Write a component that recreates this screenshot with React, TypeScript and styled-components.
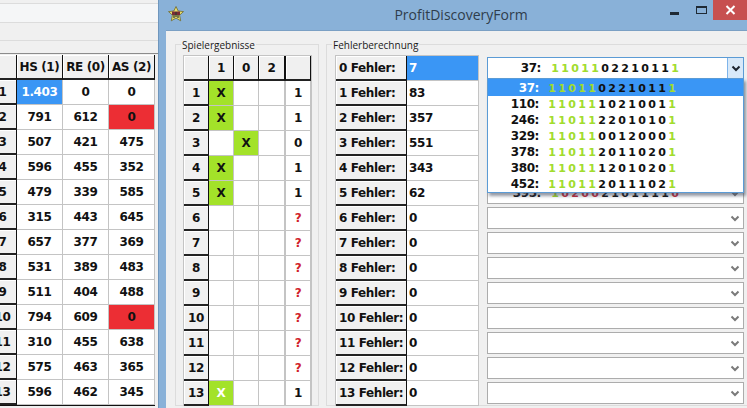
import styled, { createGlobalStyle } from "styled-components";

const GlobalStyle = createGlobalStyle`
  html, body {
    margin: 0;
    width: 747px;
    height: 408px;
    overflow: hidden;
    background: #f0f0f0;
  }
  * {
    box-sizing: border-box;
  }
`;

const scores = [
  ["1.403", "0", "0"],
  ["791", "612", "0"],
  ["507", "421", "475"],
  ["596", "455", "352"],
  ["479", "339", "585"],
  ["315", "443", "645"],
  ["657", "377", "369"],
  ["531", "389", "483"],
  ["511", "404", "488"],
  ["794", "609", "0"],
  ["310", "455", "638"],
  ["575", "463", "365"],
  ["596", "462", "345"],
];

// column index of the X per game, null = not played yet
const picks = [0, 0, 1, 0, 0, null, null, null, null, null, null, null, 0];
const errors = [7, 83, 357, 551, 343, 62, 0, 0, 0, 0, 0, 0, 0, 0];
const winner = "11011???????1";

const options = [
  { id: 37, digits: "1101102210111" },
  { id: 110, digits: "1101110210011" },
  { id: 246, digits: "1101122010101" },
  { id: 329, digits: "1101100120001" },
  { id: 378, digits: "1101120110201" },
  { id: 380, digits: "1101112010201" },
  { id: 452, digits: "1101120111021" },
];

function toneOf(digit: string, index: number) {
  if (winner[index] === "?") return "plain";
  return winner[index] === digit ? "hit" : "miss";
}

function Ticket({ id, digits, labelWidth, gap, active }: { id: number; digits: string; labelWidth: number; gap: number; active?: boolean }) {
  return (
    <TicketRow style={{ gap }}>
      <TicketId style={{ width: labelWidth }} $active={active}>{id}:</TicketId>
      <span>
        {digits.split("").map((d, i) => (
          <Digit key={i} $tone={toneOf(d, i)} $active={active}>{d}</Digit>
        ))}
      </span>
    </TicketRow>
  );
}

function Chevron({ dark }: { dark?: boolean }) {
  return (
    <svg width="10" height="7" viewBox="0 0 10 7">
      <polyline points="1.5,1.5 5,5 8.5,1.5" fill="none" stroke={dark ? "#1c2530" : "#7a7a7a"} strokeWidth="2" />
    </svg>
  );
}

function AppIcon() {
  return (
    <svg width="16" height="16" viewBox="0 0 16 16">
      <polygon points="8,0.5 10.2,5 15.5,5.6 11.6,9.2 12.7,14.8 8,12.1 3.3,14.8 4.4,9.2 0.5,5.6 5.8,5" fill="#e8dc6a" stroke="#6e6a30" strokeWidth="0.8" />
      <rect x="4" y="5.5" width="8" height="3.5" fill="#7a2b35" />
      <path d="M6 9v3M10 9v3M8 6v5" stroke="#2f3a30" strokeWidth="1.2" />
    </svg>
  );
}

export default function App() {
  return (
    <Screen>
      <GlobalStyle />
      <BackWindow>
        <Band $height={4} />
        <Band $height={19} $light />
        <Band $height={18} />
        <Band $height={13} $last />
        <ScoreGrid>
          <HeadCell />
          <HeadCell>HS (1)</HeadCell>
          <HeadCell>RE (0)</HeadCell>
          <HeadCell>AS (2)</HeadCell>
          {scores.map((row, i) => [
            <HeadCell key={`h${i}`}>{i + 1}</HeadCell>,
            ...row.map((value, j) => (
              <Cell
                key={`${i}-${j}`}
                $fill={i === 0 && j === 0 ? "#3a96f5" : value === "0" && j === 2 && i > 0 ? "#ec2e34" : undefined}
                $color={i === 0 && j === 0 ? "#fff" : undefined}
              >
                {value}
              </Cell>
            )),
          ])}
        </ScoreGrid>
      </BackWindow>

      <FormWindow>
        <TitleBar>
          <IconSlot>
            <AppIcon />
          </IconSlot>
          <Title>ProfitDiscoveryForm</Title>
          <WindowButton>
            <svg width="10" height="10" viewBox="0 0 10 10">
              <rect x="0" y="7" width="9" height="3" fill="#1f2a35" />
            </svg>
          </WindowButton>
          <WindowButton>
            <svg width="11" height="8" viewBox="0 0 11 8">
              <rect x="0.5" y="0.5" width="10" height="7" fill="none" stroke="#1f2a35" strokeWidth="1" />
              <rect x="0" y="0" width="11" height="2" fill="#1f2a35" />
            </svg>
          </WindowButton>
          <CloseButton>
            <svg width="11" height="10" viewBox="0 0 11 10">
              <path d="M1.5 1l8 8M9.5 1l-8 8" stroke="#fff" strokeWidth="2" />
            </svg>
          </CloseButton>
        </TitleBar>

        <Client>
          <ResultsBox>
            <Legend>Spielergebnisse</Legend>
            <ResultsGrid>
              <HeadCell />
              <HeadCell>1</HeadCell>
              <HeadCell>0</HeadCell>
              <HeadCell>2</HeadCell>
              <HeadCell $split />
              {picks.map((pick, i) => [
                <HeadCell key={`r${i}`}>{i + 1}</HeadCell>,
                ...[0, 1, 2].map((col) => (
                  <Cell
                    key={`${i}-${col}`}
                    $fill={pick === col ? "#a3e229" : undefined}
                    $color={i === 12 ? "#fff" : undefined}
                  >
                    {pick === col ? "X" : ""}
                  </Cell>
                )),
                <Cell key={`res${i}`} $split $color={pick === null ? "#d0202a" : undefined}>
                  {pick === null ? "?" : pick === 1 ? "0" : "1"}
                </Cell>,
              ])}
            </ResultsGrid>
          </ResultsBox>

          <ErrorsBox>
            <Legend>Fehlerberechnung</Legend>
            <ErrorsGrid>
              {errors.map((count, i) => [
                <ErrorLabel key={`e${i}`}>{i} Fehler:</ErrorLabel>,
                <ValueCell key={`v${i}`} $selected={i === 0}>{count}</ValueCell>,
              ])}
            </ErrorsGrid>
            <ComboColumn>
              <Combo $focused>
                <ComboValue>
                  <Ticket id={37} digits={options[0].digits} labelWidth={53} gap={9} />
                </ComboValue>
                <ComboArrow $focused>
                  <Chevron dark />
                </ComboArrow>
                <Popup>
                  {options.map((option, i) => (
                    <PopupItem key={option.id} $active={i === 0}>
                      <Ticket id={option.id} digits={option.digits} labelWidth={51} gap={8} active={i === 0} />
                    </PopupItem>
                  ))}
                </Popup>
              </Combo>
              {errors.slice(1).map((_, i) => (
                <Combo key={i}>
                  <ComboValue>
                    {i === 4 && <Ticket id={395} digits="1020021011110" labelWidth={53} gap={9} />}
                  </ComboValue>
                  <ComboArrow>
                    <Chevron />
                  </ComboArrow>
                </Combo>
              ))}
            </ComboColumn>
          </ErrorsBox>
        </Client>
      </FormWindow>
    </Screen>
  );
}

const Screen = styled.div`
  display: flex;
  width: 747px;
  height: 408px;
  overflow: hidden;
  font-family: "DejaVu Sans", Verdana, sans-serif;
  font-size: 12px;
  letter-spacing: -0.4px;
  font-weight: 700;
  color: #111;
`;

const BackWindow = styled.div`
  width: 158px;
  flex: none;
  overflow: hidden;
  background: #f0f0f0;
`;

const Band = styled.div<{ $height: number; $light?: boolean; $last?: boolean }>`
  height: ${(p) => p.$height}px;
  background: ${(p) => (p.$light ? "#f5f6f7" : "#f0f0f0")};
  border-bottom: 1px solid ${(p) => (p.$last ? "#8c8c8c" : "#dcdcdc")};
`;

const ScoreGrid = styled.div`
  display: grid;
  grid-template-columns: 28px 46px 46px 46px;
  grid-auto-rows: 25px;
  width: 166px;
  margin: 1px 0 0 -11px;
  border-bottom: 1px solid #111;
`;

const Cell = styled.div<{ $fill?: string; $color?: string; $split?: boolean }>`
  display: flex;
  align-items: center;
  justify-content: center;
  background: ${(p) => p.$fill ?? "#fff"};
  color: ${(p) => p.$color ?? "#111"};
  border-right: 1px solid #c4c4c4;
  border-bottom: 1px solid #c4c4c4;
  border-left: ${(p) => (p.$split ? "1px solid #c4c4c4" : "none")};
`;

const HeadCell = styled.div<{ $split?: boolean }>`
  display: flex;
  align-items: center;
  justify-content: center;
  white-space: nowrap;
  background: #f0f0f0;
  box-shadow: inset 1px 1px 0 #fff;
  border-right: 1px solid #111;
  border-bottom: 2px solid #222;
  border-left: ${(p) => (p.$split ? "1px solid #111" : "none")};
`;

const ErrorLabel = styled(HeadCell)`
  justify-content: flex-start;
  padding-left: 3px;
`;

const FormWindow = styled.div`
  flex: 1;
  display: flex;
  flex-direction: column;
  min-width: 0;
  background: #89b1d8;
  border-left: 1px solid #6f96bd;
  padding-left: 7px;
`;

const TitleBar = styled.div`
  height: 30px;
  flex: none;
  display: flex;
  align-items: flex-start;
`;

const IconSlot = styled.div`
  width: 16px;
  margin: 6px 0 0 2px;
  line-height: 0;
`;

const Title = styled.div`
  flex: 1;
  padding: 5px 0 0 77px;
  text-align: center;
  font-family: "Open Sans", sans-serif;
  font-size: 14px;
  letter-spacing: 0;
  font-weight: 400;
  color: #2f3d4c;
`;

const WindowButton = styled.div`
  width: 27px;
  height: 20px;
  display: flex;
  align-items: center;
  justify-content: center;
  line-height: 0;
`;

const CloseButton = styled(WindowButton)`
  width: 34px;
  margin-left: -2px;
  background: #c75050;
`;

const Client = styled.div`
  flex: 1;
  display: flex;
  gap: 7px;
  padding: 13px 0 2px 9px;
  background: #f0f0f0;
  border-top: 1px solid #7ba0c4;
  overflow: hidden;
`;

const GroupBox = styled.div`
  position: relative;
  display: flex;
  padding: 10px 0 0 8px;
  border: 1px solid #dcdcdc;
`;

const ResultsBox = styled(GroupBox)`
  width: 144px;
  flex: none;
  padding-left: 7px;
`;

const ErrorsBox = styled(GroupBox)`
  flex: 1;
  gap: 8px;
  border-right: none;
`;

const Legend = styled.div`
  position: absolute;
  top: -6px;
  left: 5px;
  padding: 0 1px;
  background: #f0f0f0;
  font-family: "Open Sans", sans-serif;
  font-size: 10px;
  letter-spacing: 0;
  line-height: 13px;
  font-weight: 400;
  color: #1a1a1a;
`;

const ResultsGrid = styled.div`
  display: grid;
  grid-template-columns: 25px 25px 25px 26px 26px;
  grid-auto-rows: 25px;
  align-content: start;
  border: 1px solid #c4c4c4;
  border-bottom: none;
  height: 351px;
  width: 129px;
`;

const ErrorsGrid = styled.div`
  display: grid;
  grid-template-columns: 71px 71px;
  grid-auto-rows: 25px;
  align-content: start;
  flex: none;
  width: 144px;
  height: 351px;
  border: 1px solid #c4c4c4;
  border-bottom: none;
`;

const ValueCell = styled.div<{ $selected?: boolean }>`
  display: flex;
  align-items: center;
  padding-left: 2px;
  background: ${(p) => (p.$selected ? "#3a96f5" : "#fff")};
  color: ${(p) => (p.$selected ? "#fff" : "#111")};
  border-bottom: 1px solid #c4c4c4;
`;

const ComboColumn = styled.div`
  display: flex;
  flex-direction: column;
  gap: 3px;
  width: 257px;
  flex: none;
  padding-top: 2px;
`;

const Combo = styled.div<{ $focused?: boolean }>`
  position: relative;
  display: flex;
  height: 22px;
  flex: none;
  background: #fff;
  border: 1px solid ${(p) => (p.$focused ? "#5b9bd5" : "#acacac")};
`;

const ComboValue = styled.div`
  flex: 1;
  display: flex;
  align-items: center;
  min-width: 0;
`;

const ComboArrow = styled.div<{ $focused?: boolean }>`
  width: 16px;
  display: flex;
  align-items: center;
  justify-content: center;
  line-height: 0;
  background: ${(p) => (p.$focused ? "#d8e9f9" : "#fff")};
  border-left: ${(p) => (p.$focused ? "1px solid #7eb4ea" : "none")};
`;

const Popup = styled.div`
  position: absolute;
  top: 20px;
  left: -1px;
  right: -1px;
  height: 115px;
  z-index: 2;
  background: #fff;
  border: 1px solid #5b9bd5;
  box-shadow: 2px 3px 3px rgba(60, 70, 90, 0.55);
`;

const PopupItem = styled.div<{ $active?: boolean }>`
  display: flex;
  align-items: center;
  height: ${(p) => (p.$active ? 17 : 16)}px;
  background: ${(p) => (p.$active ? "#3a96f5" : "transparent")};
`;

const TicketRow = styled.div`
  display: flex;
  align-items: center;
`;

const TicketId = styled.span<{ $active?: boolean }>`
  text-align: right;
  color: ${(p) => (p.$active ? "#fff" : "#111")};
`;

const toneColors: Record<string, string> = {
  hit: "#a2dc2e",
  miss: "#c8283c",
  plain: "#111",
};

const Digit = styled.span<{ $tone: string; $active?: boolean }>`
  display: inline-block;
  width: 10px;
  text-align: center;
  font-size: 11px;
  letter-spacing: 0;
  color: ${(p) => (p.$active && p.$tone === "plain" ? "#111" : toneColors[p.$tone])};
`;
